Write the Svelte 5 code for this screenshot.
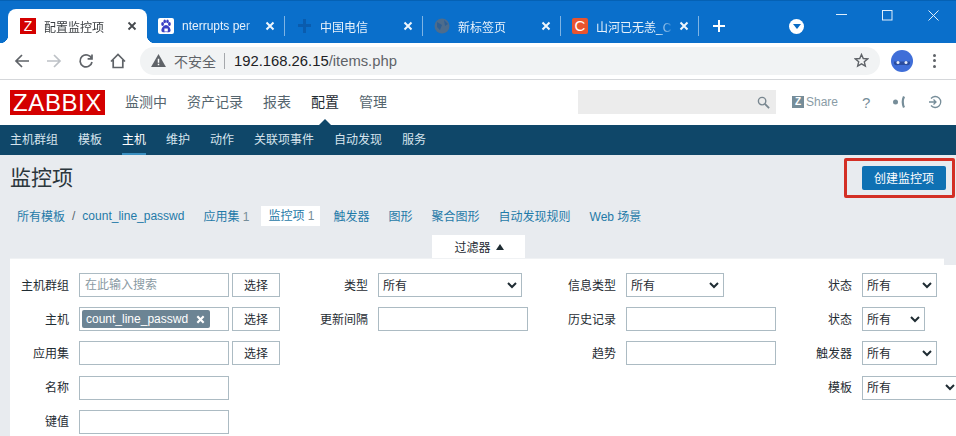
<script>
  const tabs = [
    { title: 'nterrupts per', icon: 'paw' },
    { title: '中国电信', icon: 'cross' },
    { title: '新标签页', icon: 'globe' },
    { title: '山河已无恙_C', icon: 'c' }
  ];
  const mainNav = ['监测中', '资产记录', '报表', '配置', '管理'];
  const subNav = ['主机群组', '模板', '主机', '维护', '动作', '关联项事件', '自动发现', '服务'];
</script>

<div class="page">
  <div class="tabstrip">
    <div class="tab active">
      <span class="fav zfav">Z</span>
      <span class="tab-title">配置监控项</span>
      <svg class="tab-x" viewBox="0 0 10 10"><path d="M1.5 1.5l7 7M8.5 1.5l-7 7" /></svg>
    </div>
    {#each tabs as t}
      <div class="tab">
        {#if t.icon === 'paw'}
          <svg class="favsvg" viewBox="0 0 16 16">
            <rect width="16" height="16" rx="2" fill="#fff" />
            <g fill="#3a3fc4">
              <ellipse cx="4.6" cy="6" rx="1.4" ry="2" />
              <ellipse cx="11.4" cy="6" rx="1.4" ry="2" />
              <ellipse cx="6.7" cy="3.4" rx="1.3" ry="1.8" />
              <ellipse cx="9.5" cy="3.4" rx="1.3" ry="1.8" />
              <path d="M8 7c-2 0-4.6 3-4.6 5.2C3.4 14 5 14.6 8 14c3 .6 4.6 0 4.6-1.8C12.6 10 10 7 8 7z" />
            </g>
            <rect x="6.4" y="10.5" width="3.4" height="3" fill="#fff" />
          </svg>
        {:else if t.icon === 'cross'}
          <svg class="favsvg" viewBox="0 0 16 16">
            <path d="M7 1h3v5h5v3h-5v6H7V9H2V6h5z" fill="#0a5cae" />
          </svg>
        {:else if t.icon === 'globe'}
          <svg class="favsvg" viewBox="0 0 16 16">
            <circle cx="8" cy="8" r="7.5" fill="#4d6c8c" />
            <path d="M3 4l5 3-2 5-3-3zM10 2l4 4-3 2z" fill="#2f5f93" />
          </svg>
        {:else}
          <span class="fav cfav">C</span>
        {/if}
        <span class="tab-title">{t.title}</span>
        <svg class="tab-x" viewBox="0 0 10 10"><path d="M1.5 1.5l7 7M8.5 1.5l-7 7" /></svg>
      </div>
    {/each}
    <svg class="plus" viewBox="0 0 12 12"><path d="M6 0v12M0 6h12" /></svg>
    <div class="strip-end">
      <span class="dropcircle"><svg viewBox="0 0 8 6"><path d="M0 0h8L4 5z" fill="#0a6bc4" /></svg></span>
      <div class="winctl">
        <svg viewBox="0 0 11 11"><path d="M0 4.500h11" /></svg>
        <svg viewBox="0 0 11 11"><rect x=".5" y=".5" width="9.500" height="9.500" /></svg>
        <svg viewBox="0 0 11 11"><path d="M.5.5l10 10M10.500.5l-10 10" /></svg>
      </div>
    </div>
  </div>

  <div class="toolbar">
    <svg class="tool" viewBox="0 0 16 16"><path d="M15 8H2M8 2L2 8l6 6" /></svg>
    <svg class="tool off" viewBox="0 0 16 16"><path d="M1 8h13M8 2l6 6-6 6" /></svg>
    <svg class="tool" viewBox="0 0 16 16"><path d="M13.6 5.5A6 6 0 1 0 14 9M14 1.5v4.4H9.6" /></svg>
    <svg class="tool" viewBox="0 0 16 16"><path d="M1 8.5L8 1.5l7 7M3.2 7v7.5h9.6V7" /></svg>
    <div class="omnibox">
      <svg class="warn" viewBox="0 0 16 14"><path d="M8 0l8 14H0z" fill="#5f6368" /><path d="M7.2 5h1.6v4.5H7.2zM7.2 10.5h1.6V12H7.2z" fill="#fff" /></svg>
      <span class="insecure">不安全</span>
      <span class="omni-sep"></span>
      <span class="url">192.168.26.15<span class="path">/items.php</span></span>
      <svg class="star" viewBox="0 0 16 16"><path d="M8 1.6l1.9 4.3 4.7.4-3.6 3.1 1.1 4.6L8 11.6 3.9 14 5 9.4 1.400 6.300l4.700-.4z" /></svg>
    </div>
    <svg class="avatar" viewBox="0 0 22 22">
      <circle cx="11" cy="11" r="11" fill="#3f6ed8" />
      <path d="M3 11.500h16v2.500a4 4 0 0 1-4 1H7a4 4 0 0 1-4-1z" fill="#2a4c9e" />
      <circle cx="7" cy="12.500" r="1.500" fill="#e6edfb" />
      <circle cx="15" cy="12.500" r="1.500" fill="#e6edfb" />
    </svg>
    <span class="kebab"><i></i><i></i><i></i></span>
  </div>

  <header class="zheader">
    <span class="logo">ZABBIX</span>
    <nav class="mainnav">
      {#each mainNav as n}
        <span class:cur={n === '配置'}>{n}</span>
      {/each}
    </nav>
    <div class="search">
      <svg viewBox="0 0 14 14"><circle cx="5.500" cy="5.500" r="4" /><path d="M8.500 8.500L13 13" stroke-width="2" /></svg>
    </div>
    <span class="share"><b>Z</b>Share</span>
    <span class="help">?</span>
    <svg class="hicon" viewBox="0 0 14 14"><circle cx="3.500" cy="7" r="2.500" fill="#768d99" /><path d="M12 1.500Q9.500 7 12 12.500" fill="none" stroke="#768d99" stroke-width="2.200" /></svg>
    <svg class="hicon" viewBox="0 0 14 14"><path d="M3 3.500A5.500 5.500 0 1 1 3 10.500M1 7h7M5.500 4.500L8 7l-2.500 2.500" fill="none" stroke="#768d99" stroke-width="1.300" /></svg>
  </header>

  <nav class="subnav">
    {#each subNav as n}
      <span class:on={n === '主机'}>{n}</span>
    {/each}
  </nav>

  <div class="titlebar">
    <h1>监控项</h1>
    <div class="callout"><button class="create">创建监控项</button></div>
  </div>

  <div class="crumbs">
    <a class="c1">所有模板</a><span class="slash">/</span><a class="c2">count_line_passwd</a>
    <a class="c3">应用集 <em>1</em></a>
    <a class="c4">监控项 <em>1</em></a>
    <a>触发器</a><a>图形</a><a>聚合图形</a><a>自动发现规则</a><a>Web 场景</a>
  </div>

  <div class="filter-tabrow">
    <div class="filter-tab">过滤器 <span class="tri"></span></div>
  </div>

  <div class="filter">
    <div class="col c-a">
      <div class="row"><label>主机群组</label><input class="w150" placeholder="在此输入搜索" /><button class="sel">选择</button></div>
      <div class="row"><label>主机</label>
        <div class="multi"><span class="chip">count_line_passwd<svg viewBox="0 0 10 10"><path d="M1.500 1.500l7 7M8.500 1.500l-7 7" /></svg></span></div>
        <button class="sel">选择</button></div>
      <div class="row"><label>应用集</label><input class="w150" /><button class="sel">选择</button></div>
      <div class="row"><label>名称</label><input class="w150" /></div>
      <div class="row"><label>键值</label><input class="w150" /></div>
    </div>
    <div class="col c-b">
      <div class="row"><label>类型</label><div class="select" style="width:144px">所有<svg viewBox="0 0 10 7"><path d="M1 1l4 4 4-4" /></svg></div></div>
      <div class="row"><label>更新间隔</label><input class="w150" /></div>
    </div>
    <div class="col c-c">
      <div class="row"><label>信息类型</label><div class="select" style="width:98px">所有<svg viewBox="0 0 10 7"><path d="M1 1l4 4 4-4" /></svg></div></div>
      <div class="row"><label>历史记录</label><input class="w150" /></div>
      <div class="row"><label>趋势</label><input class="w150" /></div>
    </div>
    <div class="col c-d">
      <div class="row"><label>状态</label><div class="select" style="width:75px">所有<svg viewBox="0 0 10 7"><path d="M1 1l4 4 4-4" /></svg></div></div>
      <div class="row"><label>状态</label><div class="select" style="width:63px">所有<svg viewBox="0 0 10 7"><path d="M1 1l4 4 4-4" /></svg></div></div>
      <div class="row"><label>触发器</label><div class="select" style="width:75px">所有<svg viewBox="0 0 10 7"><path d="M1 1l4 4 4-4" /></svg></div></div>
      <div class="row"><label>模板</label><div class="select" style="width:98px">所有<svg viewBox="0 0 10 7"><path d="M1 1l4 4 4-4" /></svg></div></div>
    </div>
  </div>
</div>

<style>
  :global(body) { margin: 0; overflow: hidden; }
  .page {
    width: 956px; height: 436px; overflow: hidden; background: #e8ebef;
    font-family: "Liberation Sans", "Noto Sans CJK SC", sans-serif; font-size: 12px; color: #1f2c33;
  }

  /* browser tabs */
  .tabstrip { height: 43px; background: #0a6fcb; border-top: 1px solid #0561b4; box-sizing: border-box; display: flex; align-items: flex-end; padding-left: 8px; }
  .tab { width: 138px; height: 34px; flex: none; display: flex; align-items: center; padding-left: 11px; box-sizing: border-box; position: relative; color: #e8f2fb; font-size: 12px; }
  .tab.active { width: 139px; padding-left: 12px; background: #fff; color: #3c4043; border-radius: 8px 8px 0 0; }
  .tab:not(.active)::after { content: ""; position: absolute; right: 0; top: 7px; height: 20px; width: 1px; background: #7fb4e4; }
  .tab.active::before { content: ""; position: absolute; left: -8px; bottom: 0; width: 8px; height: 8px; background: radial-gradient(circle at 0 0, transparent 8px, #fff 8.500px); }
  .tab.active::after { content: ""; position: absolute; right: -8px; bottom: 0; width: 8px; height: 8px; background: radial-gradient(circle at 100% 0, transparent 8px, #fff 8.500px); }
  .fav, .favsvg { width: 16px; height: 16px; flex: none; margin-right: 8px; }
  .fav { display: flex; align-items: center; justify-content: center; color: #fff; font-size: 14px; line-height: 16px; }
  .zfav { background: #d40000; }
  .cfav { background: #e8542e; border-radius: 2px; font-size: 15px; }
  .tab-title { width: 83px; flex: none; white-space: nowrap; overflow: hidden; -webkit-mask-image: linear-gradient(90deg, #000 62px, transparent 78px); mask-image: linear-gradient(90deg, #000 62px, transparent 78px); }
  .tab-x { width: 10px; height: 10px; fill: none; stroke: #eef6fd; stroke-width: 2; }
  .tab.active .tab-x { stroke: #45494d; stroke-width: 1.800; }
  .plus { width: 12px; height: 12px; margin: 0 0 11px 14px; stroke: #fff; stroke-width: 2; fill: none; }
  .strip-end { flex: 1; display: flex; align-self: stretch; justify-content: space-between; }
  .dropcircle { width: 15px; height: 15px; border-radius: 50%; background: #fff; display: flex; align-items: center; justify-content: center; margin: 18px 0 0 64px; }
  .dropcircle svg { width: 8px; height: 6px; }
  .winctl { display: flex; gap: 35px; padding: 9px 17px 0 0; }
  .winctl svg { width: 11px; height: 11px; fill: none; stroke: #dfeefb; stroke-width: 1; }

  /* toolbar */
  .toolbar { height: 37px; background: #fff; border-bottom: 1px solid #d5d7da; box-sizing: border-box; display: flex; align-items: center; padding: 0 0 1px 14px; }
  .tool { width: 16px; height: 16px; flex: none; fill: none; stroke: #5f6368; stroke-width: 1.700; margin-right: 16px; }
  .tool.off { stroke: #bdc1c6; }
  .omnibox { width: 740px; height: 28px; margin-left: -2px; background: #f1f3f4; border-radius: 14px; display: flex; align-items: center; padding-left: 11px; box-sizing: border-box; flex: none; }
  .warn { width: 15px; height: 13px; flex: none; margin-right: 8px; }
  .insecure { color: #5f6368; font-size: 14px; }
  .omni-sep { width: 1px; height: 16px; background: #a5a8ac; margin: 0 9px 0 8px; }
  .url { color: #202124; font-size: 14.800px; flex: 1; }
  .path { color: #5f6368; }
  .star { width: 15px; height: 15px; fill: none; stroke: #5f6368; stroke-width: 1.500; margin-right: 11px; }
  .avatar { width: 22px; height: 22px; margin-left: 11px; flex: none; }
  .kebab { display: flex; flex-direction: column; gap: 2.500px; margin-left: 20px; }
  .kebab i { width: 3px; height: 3px; border-radius: 50%; background: #5f6368; }

  /* zabbix header */
  .zheader { height: 45px; background: #fff; display: flex; align-items: center; padding-left: 10px; box-sizing: border-box; border-bottom: 1px solid #fff; }
  .logo { width: 95px; height: 25px; background: #d40000; color: #fff; font-size: 24px; line-height: 26px; text-align: center; letter-spacing: .6px; flex: none; }
  .mainnav { display: flex; gap: 20px; margin-left: 20px; font-size: 14px; color: #55656e; width: 453px; flex: none; margin-top: -2px; }
  .mainnav span { position: relative; }
  .mainnav .cur { color: #1f2c33; }
  .mainnav .cur::after { content: ""; position: absolute; left: 50%; bottom: -14px; margin-left: -6px; border: 6px solid transparent; border-top: 0; border-bottom-color: #0f4769; }
  .search { width: 198px; height: 24px; background: #ececec; display: flex; align-items: center; justify-content: flex-end; padding-right: 6px; box-sizing: border-box; flex: none; }
  .search svg { width: 13px; height: 13px; fill: none; stroke: #78868f; stroke-width: 1.500; }
  .share { display: flex; align-items: center; color: #8a9ca6; font-size: 12px; margin-left: 16px; width: 48px; flex: none; }
  .share b { width: 12px; height: 12px; background: #768d99; color: #fff; font-size: 10px; line-height: 12px; text-align: center; margin-right: 2px; }
  .help { color: #768d99; font-size: 15px; margin-left: 22px; width: 8px; flex: none; }
  .hicon { width: 14px; height: 14px; flex: none; margin-left: 22px; }
  .hicon:last-child { margin-left: 22px; }

  /* sub nav */
  .subnav { height: 30px; background: #0f4769; display: flex; gap: 20px; padding-left: 10px; color: #d6e4ed; font-size: 12px; line-height: 30px; box-sizing: border-box; }
  .subnav .on { color: #fff; border-bottom: 2px solid #3a8fc0; height: 30px; box-sizing: border-box; }

  /* title */
  .titlebar { height: 45px; display: flex; align-items: center; justify-content: space-between; padding: 0 1px 0 10px; box-sizing: border-box; }
  h1 { margin: -3px 0 0; font-size: 21px; font-weight: 400; color: #2b363c; }
  .callout { border: 3px solid #d32f25; border-radius: 2px; width: 111px; height: 40px; box-sizing: border-box; display: flex; align-items: center; justify-content: flex-end; padding-right: 6px; }
  .create { width: 84px; height: 24px; border: 0; border-radius: 2px; background: #0f71b3; color: #fff; font: inherit; padding: 0; }

  /* breadcrumbs */
  .crumbs { height: 35px; display: flex; align-items: center; padding-left: 17px; color: #1f7aa8; box-sizing: border-box; padding-bottom: 4px; }
  .crumbs a { margin-right: 19px; }
  .crumbs .c1 { margin-right: 0; }
  .crumbs .c2 { margin-right: 19px; }
  .slash { margin: 0 7px; color: #55656e; }
  .crumbs em { font-style: normal; color: #768d99; }
  .crumbs .c3 { margin-right: 12px; }
  .crumbs .c4 { background: #fff; padding: 0 5px 0 7px; height: 20px; line-height: 20px; margin-right: 14px; }

  /* filter */
  .filter-tabrow { display: flex; height: 23px; padding: 0 0 0 432px; }
  .filter-tab { width: 93px; height: 23px; background: #fff; display: flex; align-items: center; justify-content: center; gap: 5px; }
  .tri { width: 0; height: 0; border: 4px solid transparent; border-top: 0; border-bottom: 6px solid #1f2c33; margin-right: -1px; }
  .filter { position: relative; margin-left: 10px; background: #fff; border-top: 1px solid #f0f2f4; height: 200px; display: grid; grid-template-columns: 261px 248px 250px 177px; padding-top: 14px; box-sizing: border-box; }
  .filter::after { content: ""; position: absolute; right: 0; top: -1px; width: 12px; height: 7px; background: #e8ebef; }
  .col { display: flex; flex-direction: column; gap: 10.200px; }
  .row { display: flex; align-items: center; height: 24px; }
  .row label { text-align: right; color: #1f2c33; flex: none; margin-right: 10px; margin-top: -2px; }
  .c-a label { width: 59px; }
  .c-b label { width: 97px; }
  .c-c label { width: 97px; }
  .c-d label { width: 83px; }
  .w150, .multi { width: 150px; height: 24px; box-sizing: border-box; border: 1px solid #acbbc3; background: #fff; padding: 0 5px; font: inherit; flex: none; outline: 0; }
  .w150::placeholder { color: #8a9aa3; opacity: 1; }
  .multi { padding: 2px; display: flex; }
  .chip { background: #6c8494; color: #fff; height: 18px; line-height: 17px; padding: 0 4px; border-radius: 2px; display: flex; align-items: center; font-size: 12px; white-space: nowrap; }
  .chip svg { width: 9px; height: 9px; margin-left: 8px; margin-right: 1px; fill: none; stroke: #fff; stroke-width: 2.400; }
  .sel { width: 48px; height: 24px; margin-left: 3px; border: 1px solid #acbbc3; background: #fff; color: #1f2c33; font: inherit; padding: 0 0 2px; flex: none; }
  .select { height: 24px; box-sizing: border-box; border: 1px solid #acbbc3; background: #fff; display: flex; align-items: center; justify-content: space-between; padding: 0 4px 2px; flex: none; }
  .select svg { width: 10px; height: 7px; fill: none; stroke: #1f2c33; stroke-width: 2; margin-top: 2px; }
</style>
